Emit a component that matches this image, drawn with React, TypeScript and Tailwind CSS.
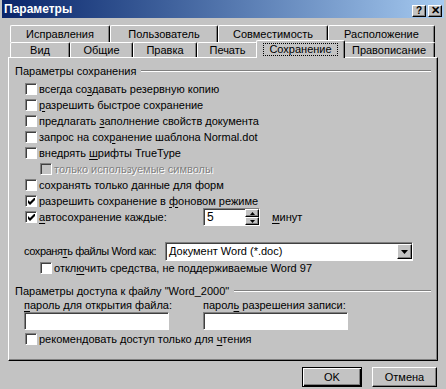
import type { ReactNode } from "react";

const raised =
  "bg-[#c3c3c3] border border-t-white border-l-white border-r-black border-b-black shadow-[inset_-1px_-1px_0_#808080]";
const sunken =
  "bg-white border border-t-[#808080] border-l-[#808080] border-r-white border-b-white shadow-[inset_1px_1px_0_#404040]";

function U({ children }: { children: ReactNode }) {
  return <span className="underline underline-offset-[2px]">{children}</span>;
}

function Check({ checked, disabled }: { checked?: boolean; disabled?: boolean }) {
  return (
    <span
      className={`w-[12px] h-[12px] shrink-0 flex items-center justify-center border border-t-[#808080] border-l-[#808080] border-r-white border-b-white shadow-[inset_1px_1px_0_#404040] ${
        disabled ? "bg-[#c3c3c3]" : "bg-white"
      }`}
    >
      {checked && (
        <svg width="7" height="7" viewBox="0 0 7 7">
          <path d="M0 2 L2 4 L7 -1 L7 2 L2 7 L0 5 Z" fill="black" />
        </svg>
      )}
    </span>
  );
}

function Row({
  checked,
  disabled,
  indent,
  children,
}: {
  checked?: boolean;
  disabled?: boolean;
  indent?: boolean;
  children: ReactNode;
}) {
  return (
    <div className={`h-[16px] flex items-center gap-[2px] ${indent ? "pl-[31px]" : "pl-[16px]"}`}>
      <Check checked={checked} disabled={disabled} />
      <span className={`whitespace-nowrap ${disabled ? "text-[#808080] [text-shadow:1px_1px_0_#fff]" : ""}`}>
        {children}
      </span>
    </div>
  );
}

function GroupLabel({ children }: { children: ReactNode }) {
  return (
    <div className="h-[14px] flex items-center pl-[6px] pr-[6px]">
      <span className="whitespace-nowrap">{children}</span>
      <div className="flex-1 ml-[5px] h-[2px] border-t border-t-[#808080] border-b border-b-white" />
    </div>
  );
}

const backTabs = [
  { label: "Исправления", w: "w-[100px]" },
  { label: "Пользователь", w: "w-[108px]" },
  { label: "Совместимость", w: "w-[110px]" },
  { label: "Расположение", w: "w-[107px]" },
];

const frontTabs = [
  { label: "Вид", w: "w-[60px]" },
  { label: "Общие", w: "w-[63px]" },
  { label: "Правка", w: "w-[64px]" },
  { label: "Печать", w: "w-[61px]" },
];

const tabCls =
  "flex items-center justify-center bg-[#c3c3c3] border-t border-l border-r border-t-white border-l-white border-r-black shadow-[inset_-1px_0_0_#808080] rounded-t-[2px] whitespace-nowrap";

export default function App() {
  return (
    <div className="w-[446px] h-[389px] bg-[#c3c3c3] overflow-hidden font-['Liberation_Sans',Arial,sans-serif] text-[11px] leading-none text-black">
      {/* title bar */}
      <div className="h-[18px] mx-[2px] flex items-center justify-between pl-[2px] pr-[2px] bg-linear-to-r from-[#0a246a] to-[#a6caf0]">
        <span className="text-white font-bold text-[12px]">Параметры</span>
        <div className="flex gap-[2px] mt-[3px]">
          <div className={`${raised} w-[14px] h-[12px] flex items-center justify-center text-[10px] font-bold`}>?</div>
          <div className={`${raised} w-[14px] h-[12px] flex items-center justify-center text-[11px] font-bold`}>✕</div>
        </div>
      </div>

      {/* tabs */}
      <div className="ml-[10px] w-[425px] mt-[7px]">
        <div className="flex h-[17px]">
          {backTabs.map((t) => (
            <div key={t.label} className={`${tabCls} ${t.w}`}>
              {t.label}
            </div>
          ))}
        </div>
        <div className="flex h-[15px]">
          {frontTabs.map((t) => (
            <div key={t.label} className={`${tabCls} ${t.w}`}>
              {t.label}
            </div>
          ))}
          <div className={`${tabCls} relative z-10 -mx-[2px] -mt-[2px] h-[18px] w-[89px] pb-[1px]`}>
            <span className="w-[75px] h-[13px] flex items-center justify-center border border-dotted border-black">
              Сохранение
            </span>
          </div>
          <div className={`${tabCls} w-[92px]`}>Правописание</div>
        </div>
      </div>

      {/* panel */}
      <div className="ml-[8px] w-[430px] h-[304px] pt-[6px] border border-t-white border-l-white border-b-black border-r-black shadow-[inset_-1px_-1px_0_#808080]">
        <GroupLabel>Параметры сохранения</GroupLabel>
        <div className="mt-[3px]">
          <Row>
            всегда со<U>з</U>давать резервную копию
          </Row>
          <Row>
            <U>р</U>азрешить быстрое сохранение
          </Row>
          <Row>
            предлагать <U>з</U>аполнение свойств документа
          </Row>
          <Row>
            запрос на сох<U>р</U>анение шаблона Normal.dot
          </Row>
          <Row>
            внедрять <U>ш</U>рифты TrueType
          </Row>
          <Row indent disabled>
            только используемые символы
          </Row>
          <Row>
            сохранять только <U>д</U>анные для форм
          </Row>
          <Row checked>
            разрешить сохранение в <U>ф</U>оновом режиме
          </Row>
          <div className="h-[16px] flex items-center pl-[16px]">
            <div className="w-[178px] shrink-0 flex items-center gap-[2px]">
              <Check checked />
              <span className="whitespace-nowrap">
                <U>а</U>втосохранение каждые:
              </span>
            </div>
            <div className={`${sunken} w-[57px] h-[18px] flex shrink-0`}>
              <span className="flex-1 flex items-center pl-[3px] text-[12px]">5</span>
              <div className="w-[14px] flex flex-col">
                <div className={`${raised} h-[8px] flex items-center justify-center`}>
                  <svg width="5" height="3" viewBox="0 0 5 3">
                    <path d="M2.5 0 L5 3 L0 3 Z" fill="black" />
                  </svg>
                </div>
                <div className={`${raised} h-[8px] flex items-center justify-center`}>
                  <svg width="5" height="3" viewBox="0 0 5 3">
                    <path d="M0 0 L5 0 L2.5 3 Z" fill="black" />
                  </svg>
                </div>
              </div>
            </div>
            <span className="ml-[12px]">
              <U>м</U>инут
            </span>
          </div>
        </div>

        <div className="mt-[17px] h-[19px] flex items-center pl-[15px]">
          <span className="w-[141px] shrink-0 whitespace-nowrap tracking-[-0.4px]">
            сохраня<U>т</U>ь файлы Word как:
          </span>
          <div className={`${sunken} w-[248px] h-[19px] flex items-center shrink-0`}>
            <span className="flex-1 pl-[3px] whitespace-nowrap">Документ Word (*.doc)</span>
            <div className={`${raised} w-[15px] h-[15px] flex items-center justify-center`}>
              <svg width="7" height="4" viewBox="0 0 7 4">
                <path d="M0 0 L7 0 L3.5 4 Z" fill="black" />
              </svg>
            </div>
          </div>
        </div>
        <div className="h-[14px] flex items-center gap-[2px] pl-[31px]">
          <Check />
          <span className="whitespace-nowrap">
            откл<U>ю</U>чить средства, не поддерживаемые Word 97
          </span>
        </div>

        <div className="mt-[9px]">
          <GroupLabel>Параметры доступа к файлу "Word_2000"</GroupLabel>
        </div>
        <div className="h-[14px] flex items-center pl-[15px]">
          <span className="w-[179px] shrink-0 whitespace-nowrap">
            <U>п</U>ароль для открытия файла:
          </span>
          <span className="whitespace-nowrap">
            парол<U>ь</U> разрешения записи:
          </span>
        </div>
        <div className="flex pl-[15px] gap-[34px]">
          <div className={`${sunken} w-[145px] h-[18px]`} />
          <div className={`${sunken} w-[145px] h-[18px]`} />
        </div>
        <div className="mt-[1px]">
          <Row>
            рекомендовать доступ только для <U>ч</U>тения
          </Row>
        </div>
      </div>

      {/* buttons */}
      <div className="mt-[6px] flex justify-end gap-[10px] pr-[9px]">
        <div className="w-[60px] h-[20px] flex items-center justify-center bg-[#c3c3c3] border border-black shadow-[inset_1px_1px_0_#fff,inset_-1px_-1px_0_#000,inset_-2px_-2px_0_#808080]">
          OK
        </div>
        <div className={`${raised} w-[65px] h-[20px] flex items-center justify-center`}>Отмена</div>
      </div>
    </div>
  );
}
